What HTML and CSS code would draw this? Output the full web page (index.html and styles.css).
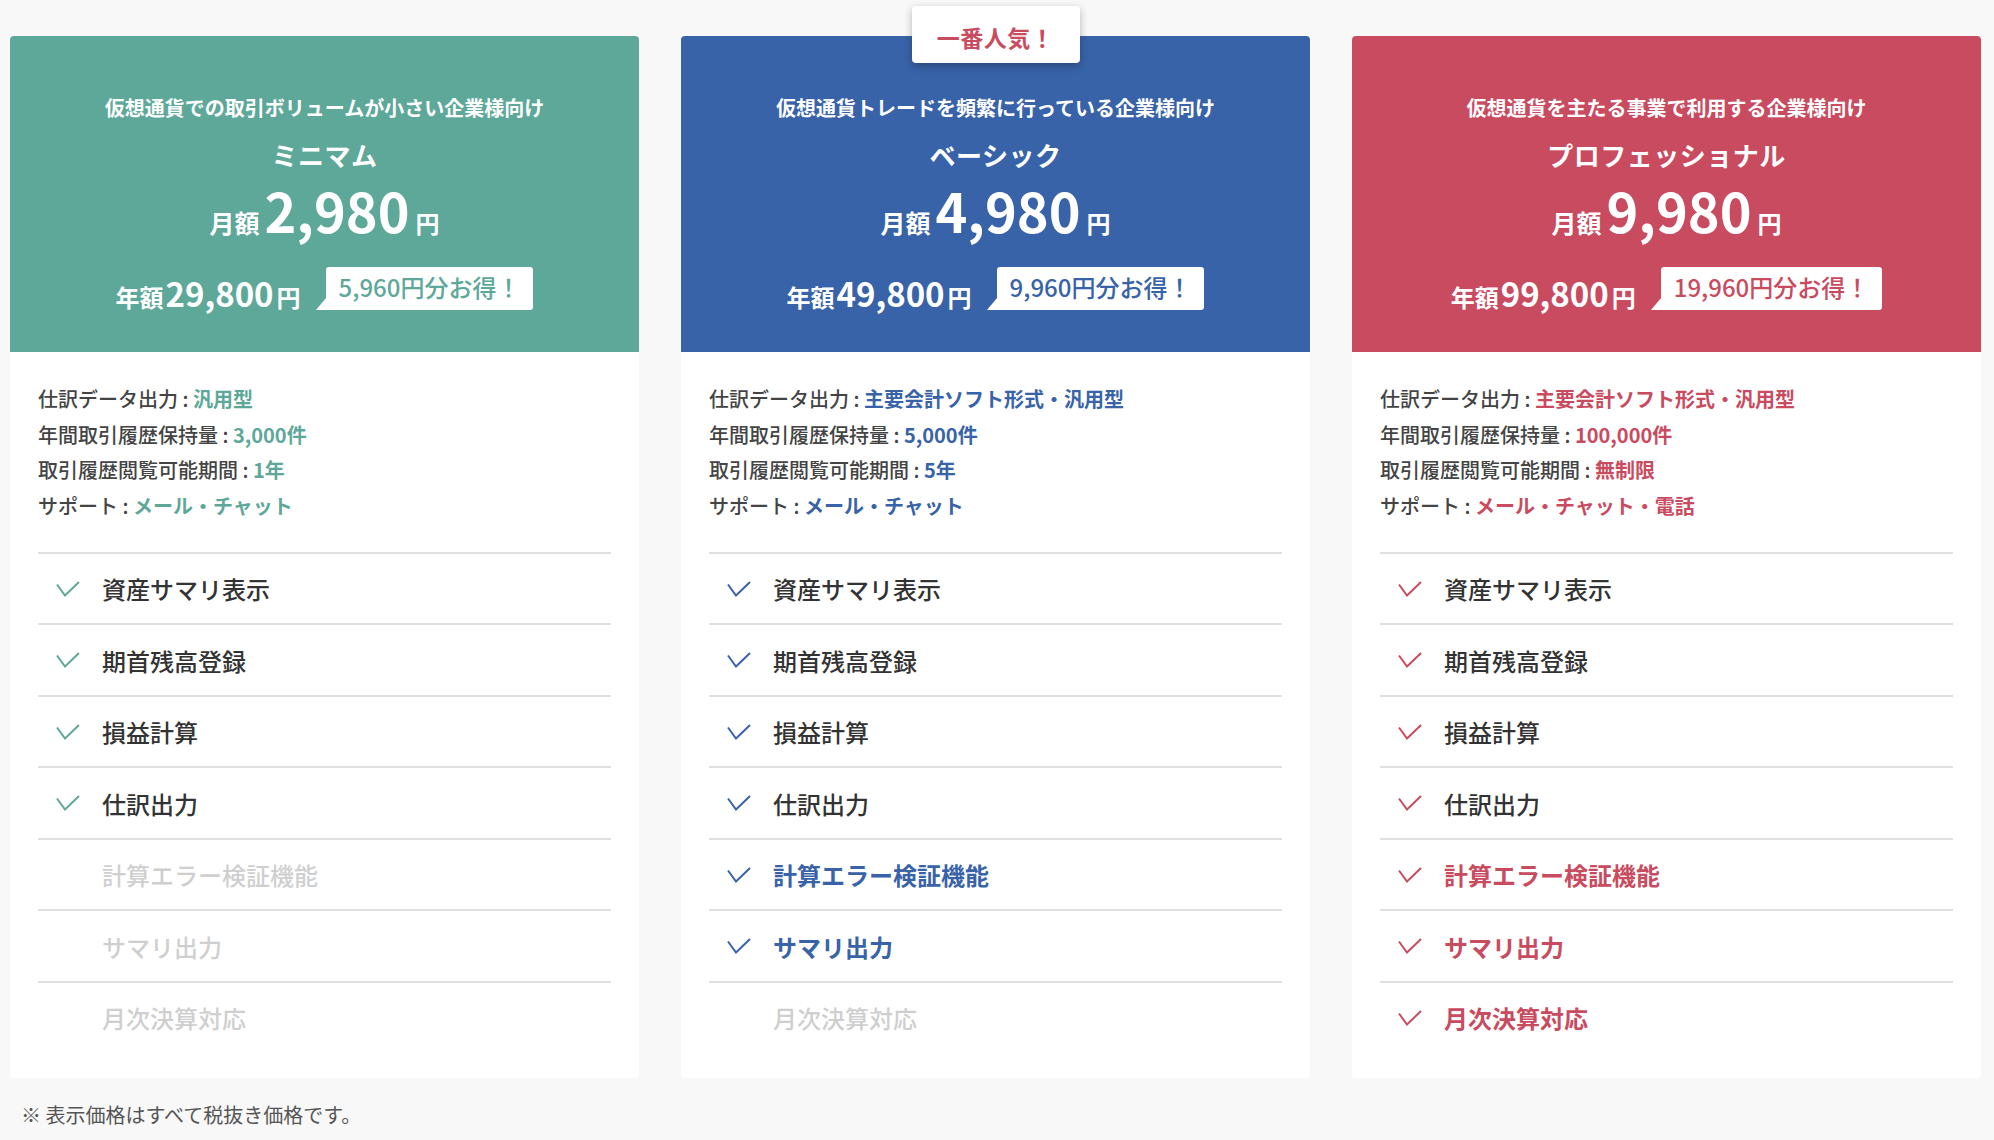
FILE: index.html
```html
<!DOCTYPE html>
<html lang="ja">
<head>
<meta charset="utf-8">
<title>料金プラン</title>
<link rel="stylesheet" href="styles.css">
</head>
<body>
<div class="plans">
  <section class="plan plan--green">
    <div class="plan-head">
      <p class="plan-target">仮想通貨での取引ボリュームが小さい企業様向け</p>
      <h2 class="plan-name">ミニマム</h2>
      <p class="plan-monthly"><span class="pm-label">月額</span><span class="pm-num">2,980</span><span class="pm-yen">円</span></p>
      <div class="plan-annual">
        <p class="pa-price"><span class="pa-label">年額</span><span class="pa-num">29,800</span><span class="pa-yen">円</span></p>
        <span class="save">5,960円分お得！</span>
      </div>
    </div>
    <div class="plan-body">
      <ul class="specs">
        <li>仕訳データ出力 : <b>汎用型</b></li>
        <li>年間取引履歴保持量 : <b>3,000件</b></li>
        <li>取引履歴閲覧可能期間 : <b>1年</b></li>
        <li>サポート : <b>メール・チャット</b></li>
      </ul>
      <ul class="features">
        <li class="feat"><svg class="check" viewBox="0 0 24 16"><polyline points="1,3.5 9,14.5 23,1"/></svg>資産サマリ表示</li>
        <li class="feat"><svg class="check" viewBox="0 0 24 16"><polyline points="1,3.5 9,14.5 23,1"/></svg>期首残高登録</li>
        <li class="feat"><svg class="check" viewBox="0 0 24 16"><polyline points="1,3.5 9,14.5 23,1"/></svg>損益計算</li>
        <li class="feat"><svg class="check" viewBox="0 0 24 16"><polyline points="1,3.5 9,14.5 23,1"/></svg>仕訳出力</li>
        <li class="feat feat--off"><svg class="check" viewBox="0 0 24 16"><polyline points="1,3.5 9,14.5 23,1"/></svg>計算エラー検証機能</li>
        <li class="feat feat--off"><svg class="check" viewBox="0 0 24 16"><polyline points="1,3.5 9,14.5 23,1"/></svg>サマリ出力</li>
        <li class="feat feat--off"><svg class="check" viewBox="0 0 24 16"><polyline points="1,3.5 9,14.5 23,1"/></svg>月次決算対応</li>
      </ul>
    </div>
  </section>

  <section class="plan plan--blue">
    <div class="popular">一番人気！</div>
    <div class="plan-head">
      <p class="plan-target">仮想通貨トレードを頻繁に行っている企業様向け</p>
      <h2 class="plan-name">ベーシック</h2>
      <p class="plan-monthly"><span class="pm-label">月額</span><span class="pm-num">4,980</span><span class="pm-yen">円</span></p>
      <div class="plan-annual">
        <p class="pa-price"><span class="pa-label">年額</span><span class="pa-num">49,800</span><span class="pa-yen">円</span></p>
        <span class="save">9,960円分お得！</span>
      </div>
    </div>
    <div class="plan-body">
      <ul class="specs">
        <li>仕訳データ出力 : <b>主要会計ソフト形式・汎用型</b></li>
        <li>年間取引履歴保持量 : <b>5,000件</b></li>
        <li>取引履歴閲覧可能期間 : <b>5年</b></li>
        <li>サポート : <b>メール・チャット</b></li>
      </ul>
      <ul class="features">
        <li class="feat"><svg class="check" viewBox="0 0 24 16"><polyline points="1,3.5 9,14.5 23,1"/></svg>資産サマリ表示</li>
        <li class="feat"><svg class="check" viewBox="0 0 24 16"><polyline points="1,3.5 9,14.5 23,1"/></svg>期首残高登録</li>
        <li class="feat"><svg class="check" viewBox="0 0 24 16"><polyline points="1,3.5 9,14.5 23,1"/></svg>損益計算</li>
        <li class="feat"><svg class="check" viewBox="0 0 24 16"><polyline points="1,3.5 9,14.5 23,1"/></svg>仕訳出力</li>
        <li class="feat feat--hl"><svg class="check" viewBox="0 0 24 16"><polyline points="1,3.5 9,14.5 23,1"/></svg>計算エラー検証機能</li>
        <li class="feat feat--hl"><svg class="check" viewBox="0 0 24 16"><polyline points="1,3.5 9,14.5 23,1"/></svg>サマリ出力</li>
        <li class="feat feat--off"><svg class="check" viewBox="0 0 24 16"><polyline points="1,3.5 9,14.5 23,1"/></svg>月次決算対応</li>
      </ul>
    </div>
  </section>

  <section class="plan plan--red">
    <div class="plan-head">
      <p class="plan-target">仮想通貨を主たる事業で利用する企業様向け</p>
      <h2 class="plan-name">プロフェッショナル</h2>
      <p class="plan-monthly"><span class="pm-label">月額</span><span class="pm-num">9,980</span><span class="pm-yen">円</span></p>
      <div class="plan-annual">
        <p class="pa-price"><span class="pa-label">年額</span><span class="pa-num">99,800</span><span class="pa-yen">円</span></p>
        <span class="save">19,960円分お得！</span>
      </div>
    </div>
    <div class="plan-body">
      <ul class="specs">
        <li>仕訳データ出力 : <b>主要会計ソフト形式・汎用型</b></li>
        <li>年間取引履歴保持量 : <b>100,000件</b></li>
        <li>取引履歴閲覧可能期間 : <b>無制限</b></li>
        <li>サポート : <b>メール・チャット・電話</b></li>
      </ul>
      <ul class="features">
        <li class="feat"><svg class="check" viewBox="0 0 24 16"><polyline points="1,3.5 9,14.5 23,1"/></svg>資産サマリ表示</li>
        <li class="feat"><svg class="check" viewBox="0 0 24 16"><polyline points="1,3.5 9,14.5 23,1"/></svg>期首残高登録</li>
        <li class="feat"><svg class="check" viewBox="0 0 24 16"><polyline points="1,3.5 9,14.5 23,1"/></svg>損益計算</li>
        <li class="feat"><svg class="check" viewBox="0 0 24 16"><polyline points="1,3.5 9,14.5 23,1"/></svg>仕訳出力</li>
        <li class="feat feat--hl"><svg class="check" viewBox="0 0 24 16"><polyline points="1,3.5 9,14.5 23,1"/></svg>計算エラー検証機能</li>
        <li class="feat feat--hl"><svg class="check" viewBox="0 0 24 16"><polyline points="1,3.5 9,14.5 23,1"/></svg>サマリ出力</li>
        <li class="feat feat--hl"><svg class="check" viewBox="0 0 24 16"><polyline points="1,3.5 9,14.5 23,1"/></svg>月次決算対応</li>
      </ul>
    </div>
  </section>
</div>
<p class="note">※ 表示価格はすべて税抜き価格です。</p>
</body>
</html>
```

FILE: styles.css
```css
* { box-sizing: border-box; }

html, body {
  margin: 0;
  padding: 0;
  background: #f8f8f8;
}

body {
  font-family: "Noto Sans CJK JP", "Noto Sans", sans-serif;
  color: #333;
}

p, h2, ul { margin: 0; padding: 0; }
ul { list-style: none; }

.plans {
  display: grid;
  grid-template-columns: repeat(3, 1fr);
  column-gap: 42px;
  padding: 36px 13px 0 10px;
}

.plan {
  --theme: #5ea89a;
  position: relative;
  background: #fff;
  border-radius: 4px;
}
.plan--green { --theme: #5ea89a; }
.plan--blue { --theme: #3963a8; }
.plan--red { --theme: #c94b60; }

.popular {
  position: absolute;
  top: -30px;
  left: 50%;
  transform: translateX(-50%);
  width: 168px;
  height: 57px;
  background: #fff;
  border-radius: 4px;
  box-shadow: 0 3px 8px rgba(0, 0, 0, 0.28);
  color: #c94b60;
  font-size: 23px;
  font-weight: 700;
  line-height: 57px;
  text-align: center;
  padding-top: 3px;
  letter-spacing: 0.02em;
  z-index: 2;
}

.plan-head {
  background: var(--theme);
  border-radius: 4px 4px 0 0;
  color: #fff;
  display: flex;
  flex-direction: column;
  align-items: center;
  padding: 57px 20px 42px;
}

.plan-target {
  font-size: 20px;
  font-weight: 700;
  line-height: 30px;
}

.plan-name {
  margin-top: 17px;
  font-size: 26px;
  font-weight: 700;
  line-height: 30px;
  letter-spacing: 0.02em;
}

.plan-monthly {
  margin-top: 0;
  display: flex;
  align-items: baseline;
  font-weight: 700;
  line-height: 1;
}
.pm-label { font-size: 25px; }
.pm-num { font-size: 54px; line-height: normal; margin: 0 6px 0 5px; }
.pm-yen { font-size: 24px; }

.plan-annual {
  margin-top: 18px;
  display: flex;
  align-items: flex-end;
  gap: 25px;
}

.pa-price {
  display: flex;
  align-items: baseline;
  font-weight: 700;
  line-height: 1;
}
.pa-label { font-size: 24px; }
.pa-num { font-size: 33px; margin: 0 3px 0 2px; }
.pa-yen { font-size: 24px; }

.save {
  position: relative;
  display: block;
  height: 43px;
  padding: 0 13px;
  background: #fff;
  border-radius: 3px 3px 3px 0;
  color: var(--theme);
  font-size: 24px;
  font-weight: 500;
  line-height: 40px;
}
.save::before {
  content: "";
  position: absolute;
  left: -10px;
  bottom: 0;
  width: 0;
  height: 0;
  border-bottom: 12px solid #fff;
  border-left: 10px solid transparent;
}

.plan-body {
  padding: 29px 28px 26px;
}

.specs li {
  font-size: 20px;
  font-weight: 500;
  line-height: 35.6px;
  color: #444;
}
.specs b {
  color: var(--theme);
  font-weight: 700;
}

.specs { margin-bottom: 28.4px; }

.feat {
  display: flex;
  align-items: center;
  height: 71.5px;
  border-top: 2px solid #e0e0e0;
  padding-left: 18px;
  font-size: 24px;
  font-weight: 500;
  color: #333;
}

.check {
  width: 24px;
  height: 16px;
  margin-right: 22px;
  flex: none;
  fill: none;
  stroke: var(--theme);
  stroke-width: 2;
}

.feat--off { color: #cfcfcf; }
.feat--off .check { visibility: hidden; }

.feat--hl {
  color: var(--theme);
  font-weight: 700;
}

.note {
  margin: 23px 0 0 21px;
  font-size: 20px;
  line-height: 28px;
  color: #555;
}
```
